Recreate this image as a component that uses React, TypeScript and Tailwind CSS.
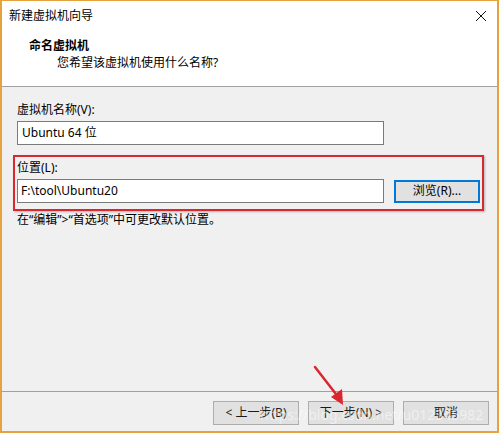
import React from "react";

const font = { fontFamily: '"Noto Sans", "Noto Sans CJK SC", sans-serif' };

function Btn({ children, className = "" }: { children: React.ReactNode; className?: string }) {
  return (
    <div
      className={`w-[86px] h-[24px] flex items-center justify-center border border-[#adadad] bg-[#e1e1e1] text-[12px] text-[#1a1a1a] ${className}`}
    >
      {children}
    </div>
  );
}

export default function App() {
  return (
    <div
      className="relative w-[499px] h-[433px] border-t border-r-2 border-b-2 border-l-2 border-[#e6a23c] bg-[#f0f0f0] flex flex-col overflow-hidden text-black"
      style={font}
    >
      {/* title bar */}
      <div className="h-[29px] bg-white flex items-center justify-between pl-[7px] pr-[7px] shrink-0">
        <span className="text-[12px] leading-none">新建虚拟机向导</span>
        <svg width="12" height="12" viewBox="0 0 12 12" className="mr-[3px]">
          <path d="M1 1 L11 11 M11 1 L1 11" stroke="#111" strokeWidth="1" />
        </svg>
      </div>
      {/* header */}
      <div className="h-[57px] bg-white border-b border-[#a0a0a0] pl-[27px] pt-[8px] shrink-0">
        <div className="text-[12px] font-bold leading-[16px]">命名虚拟机</div>
        <div className="text-[12px] leading-[16px] pl-[28px] mt-[1px]">您希望该虚拟机使用什么名称?</div>
      </div>
      {/* body */}
      <div className="flex-1 flex flex-col pl-[11px] pr-[13px]">
        <div className="pl-[4px] mt-[15px] text-[12px] leading-[16px]">虚拟机名称(V):</div>
        <div className="ml-[4px] mt-[3px] w-[367px] h-[24px] bg-white border border-[#7a7a7a] flex items-center px-[4px] text-[12px]">
          Ubuntu 64 位
        </div>
        <div className="mt-[10px] w-[471px] h-[56px] border-2 border-[#d9262f] pl-[2px] shadow-[1px_1px_2px_rgba(0,0,0,0.25)]">
          <div className="mt-[3px] text-[12px] leading-[16px]">位置(L):</div>
          <div className="mt-[3px] flex items-center gap-[10px]">
            <div className="w-[367px] h-[24px] bg-white border border-[#7a7a7a] flex items-center px-[3px] text-[12px]">
              F:\tool\Ubuntu20
            </div>
            <div className="w-[86px] h-[23px] border border-[#0078d7] bg-[#e5f1fb] flex items-center justify-center text-[12px]">
              <div className="w-[84px] h-[21px] border border-[#0078d7] bg-[#e1e1e1] flex items-center justify-center">
                浏览(R)...
              </div>
            </div>
          </div>
        </div>
        <div className="pl-[4px] mt-[1px] text-[12px] leading-[16px]">在“编辑”&gt;“首选项”中可更改默认位置。</div>
      </div>
      {/* footer */}
      <div className="h-[40px] border-t border-[#a0a0a0] flex items-start justify-end gap-[9px] pr-[8px] pt-[9px] shrink-0">
        <Btn>&lt; 上一步(B)</Btn>
        <Btn>下一步(N) &gt;</Btn>
        <Btn>取消</Btn>
      </div>
      {/* watermark */}
      <div className="absolute left-[258px] top-[403px] text-[14px] text-white/50 pointer-events-none select-none">
        https://blog.csdn.net/u012345982
      </div>
      {/* red arrow */}
      <svg className="absolute left-[305px] top-[360px]" width="50" height="52" viewBox="0 0 50 52">
        <line x1="8" y1="6" x2="32" y2="37" stroke="#d9262f" strokeWidth="2.5" strokeLinecap="round" />
        <polygon points="36,44 24,36 35,28" fill="#d9262f" />
      </svg>
    </div>
  );
}
